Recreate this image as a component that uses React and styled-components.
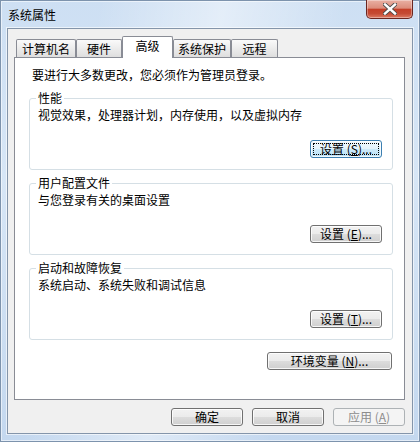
import React from 'react';
import styled, { createGlobalStyle } from 'styled-components';

const GlobalStyle = createGlobalStyle`
  html, body {
    margin: 0;
    padding: 0;
    width: 420px;
    height: 442px;
    overflow: hidden;
    background: #cfe0f3;
  }
  * { box-sizing: border-box; }
`

const FONT = `"Noto Sans CJK SC", "Microsoft YaHei", sans-serif`

const Window = styled.div`
  width: 420px;
  height: 442px;
  display: flex;
  flex-direction: column;
  font-family: ${FONT};
  font-size: 12px;
  color: #000;
  background:
    linear-gradient(100deg, rgba(255,255,255,0) 20%, rgba(255,255,255,0.45) 45%, rgba(255,255,255,0) 70%),
    linear-gradient(180deg, #cddff3 0%, #d7e6f6 40%, #c4d8ef 100%);
  box-shadow: inset 0 0 0 1px #7d93ad, inset 0 0 0 2px rgba(255,255,255,0.55);
`

const TitleBar = styled.div`
  height: 28px;
  display: flex;
  justify-content: space-between;
  align-items: center;
  padding: 0 7px 0 8px;
`

const Title = styled.span`
  line-height: 14px;
  margin-top: 1px;
`

const CloseButton = styled.div`
  align-self: flex-start;
  width: 47px;
  height: 19px;
  display: flex;
  align-items: center;
  justify-content: center;
  border: 1px solid #6b2620;
  border-top: none;
  border-radius: 0 0 5px 5px;
  background: linear-gradient(180deg, #e9b0a3 0%, #dc8c7b 45%, #c43f28 52%, #c54a33 75%, #dc7a63 100%);
  box-shadow: inset 0 0 0 1px rgba(255,255,255,0.35);
`

const Client = styled.div`
  flex: 1;
  margin: 0 7px 8px 7px;
  border: 1px solid #8495aa;
  background: #f0f0f0;
  padding: 7px 7px 0 6px;
  display: flex;
  flex-direction: column;
  box-shadow: 0 0 0 1px rgba(255,255,255,0.6);
`

const TabRow = styled.div`
  height: 21px;
  display: flex;
  align-items: flex-end;
  padding-left: 2px;
`

const Tab = styled.div`
  width: ${p => p.$w}px;
  height: ${p => (p.$active ? 22 : 18)}px;
  margin-bottom: ${p => (p.$active ? -1 : 0)}px;
  position: relative;
  z-index: ${p => (p.$active ? 1 : 0)};
  display: flex;
  align-items: center;
  justify-content: center;
  line-height: 14px;
  border: 1px solid #898c95;
  border-bottom: none;
  border-radius: 2px 2px 0 0;
  padding-bottom: ${p => (p.$active ? 3 : 0)}px;
  background: ${p => (p.$active ? '#fff' : 'linear-gradient(180deg, #fafafa 0%, #ececec 50%, #dedede 100%)')};
`

const Panel = styled.div`
  height: 343px;
  border: 1px solid #898c95;
  background: #fff;
  padding: 10px 11px 0 14px;
  display: flex;
  flex-direction: column;
`

const Intro = styled.div`
  line-height: 14px;
  height: 14px;
  margin-left: 3px;
  margin-bottom: 9px;
`

const Groups = styled.div`
  display: flex;
  flex-direction: column;
  gap: 6px;
`

const Group = styled.fieldset`
  margin: 0;
  height: 79px;
  min-width: 0;
  padding: 3px 10px 0 8px;
  border: 1px solid #d5dfe5;
  border-radius: 3px;
  display: flex;
  flex-direction: column;
`

const Legend = styled.legend`
  padding: 0 2px;
  margin-left: -2px;
  line-height: 14px;
`

const Desc = styled.div`
  line-height: 14px;
  height: 14px;
`

const Button = styled.button`
  width: ${p => p.$w || 72}px;
  height: 18px;
  padding: 0;
  position: relative;
  font-family: ${FONT};
  font-size: 12px;
  line-height: 14px;
  white-space: pre;
  color: ${p => (p.disabled ? '#8d8d8d' : '#000')};
  border-radius: 3px;
  border: 1px solid ${p => (p.disabled ? '#adb2b5' : p.$focus ? '#3c7fb1' : '#707070')};
  background: ${p =>
    p.disabled
      ? '#f4f4f4'
      : p.$focus
      ? 'linear-gradient(180deg, #f1f9fe 0%, #e3f3fc 50%, #cdebfb 50%, #b9e0f6 100%)'
      : 'linear-gradient(180deg, #f2f2f2 0%, #ebebeb 50%, #dddddd 50%, #cfcfcf 100%)'};
  box-shadow: inset 0 0 0 1px ${p => (p.disabled ? '#f4f4f4' : 'rgba(255,255,255,0.8)')};
  &::after {
    content: '';
    display: ${p => (p.$focus ? 'block' : 'none')};
    position: absolute;
    inset: 2px;
    border: 1px dotted #000;
  }
  u { text-decoration: underline; }
`

const GroupButton = styled(Button)`
  align-self: flex-end;
  margin-top: 18px;
`

const EnvButton = styled(Button)`
  align-self: flex-end;
  margin-top: 12px;
  margin-right: 1px;
`

const Footer = styled.div`
  display: flex;
  justify-content: flex-end;
  gap: 9px;
  margin-top: 8px;
`

const tabs = [
  { label: '计算机名', w: 60 },
  { label: '硬件', w: 46 },
  { label: '高级', w: 51, active: true },
  { label: '系统保护', w: 58 },
  { label: '远程', w: 47 },
]

const groups = [
  { title: '性能', desc: '视觉效果，处理器计划，内存使用，以及虚拟内存', key: 'S', focus: true },
  { title: '用户配置文件', desc: '与您登录有关的桌面设置', key: 'E' },
  { title: '启动和故障恢复', desc: '系统启动、系统失败和调试信息', key: 'T' },
]

export default function App() {
  return (
    <>
      <GlobalStyle />
      <Window>
        <TitleBar>
          <Title>系统属性</Title>
          <CloseButton>
            <svg width="14" height="12" viewBox="0 0 14 12">
              <path d="M2 1.5 L12 10.5 M12 1.5 L2 10.5" stroke="#4a4a4a" strokeWidth="4.2" strokeLinecap="square" />
              <path d="M2 1.5 L12 10.5 M12 1.5 L2 10.5" stroke="#fff" strokeWidth="2.4" strokeLinecap="square" />
            </svg>
          </CloseButton>
        </TitleBar>
        <Client>
          <TabRow>
            {tabs.map(t => (
              <Tab key={t.label} $w={t.w} $active={t.active}>{t.label}</Tab>
            ))}
          </TabRow>
          <Panel>
            <Intro>要进行大多数更改，您必须作为管理员登录。</Intro>
            <Groups>
              {groups.map(g => (
                <Group key={g.title}>
                  <Legend>{g.title}</Legend>
                  <Desc>{g.desc}</Desc>
                  <GroupButton $focus={g.focus}>
                    {'设置 ('}<u>{g.key}</u>{')...'}
                  </GroupButton>
                </Group>
              ))}
            </Groups>
            <EnvButton $w={125}>{'环境变量 ('}<u>N</u>{')...'}</EnvButton>
          </Panel>
          <Footer>
            <Button>确定</Button>
            <Button>取消</Button>
            <Button disabled>{'应用 ('}<u>A</u>{')'}</Button>
          </Footer>
        </Client>
      </Window>
    </>
  );
}
